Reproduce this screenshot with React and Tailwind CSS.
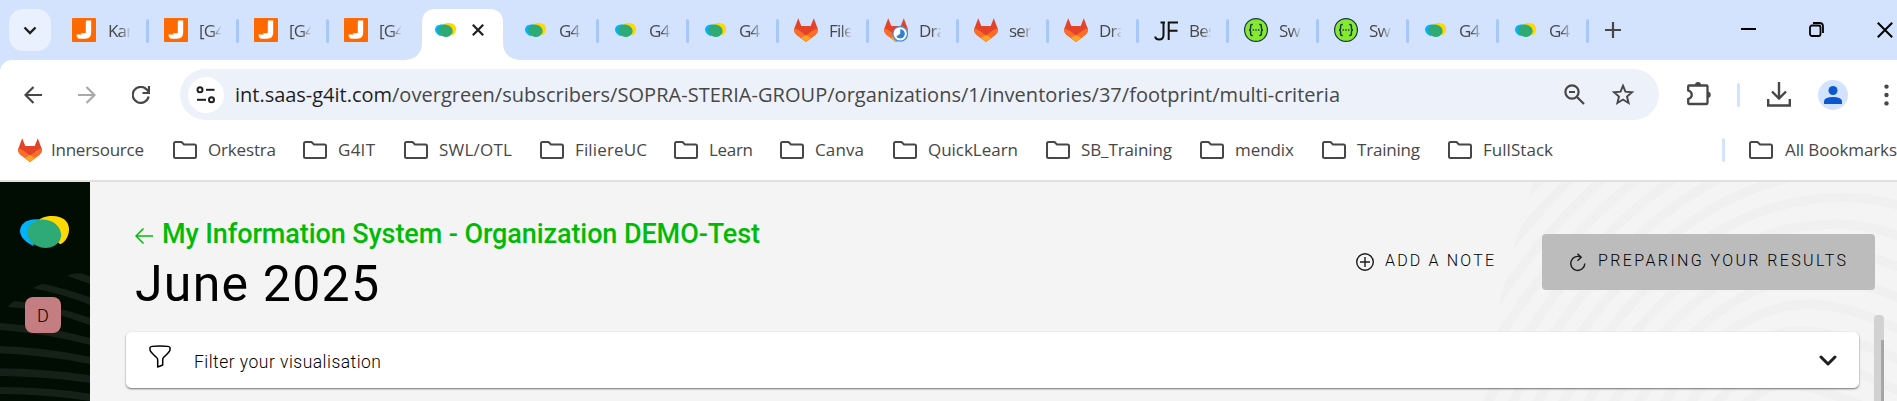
import React, { useLayoutEffect, useRef, useState } from "react";

/* Text set to a given width by spreading the difference over its letters. */
function FitText({ width, className = "", children }) {
  const ref = useRef(null);
  const [spacing, setSpacing] = useState(0);
  useLayoutEffect(() => {
    const natural = ref.current.getBoundingClientRect().width;
    setSpacing((width - natural) / (children.length - 1));
  }, []);
  return (
    <span className={`shrink-0 overflow-visible whitespace-nowrap ${className}`} style={{ width }}>
      <span ref={ref} className="inline-block" style={{ letterSpacing: spacing }}>
        {children}
      </span>
    </span>
  );
}

function G4Logo({ className }) {
  return (
    <svg viewBox="60 108 147 96" className={className} preserveAspectRatio="none">
      <path d="M112 122C128 111 143 107 158 108C190 109 208 125 207 150C206 170 195 187 180 193Z" fill="#ffd900" />
      <path d="M118 118C80 115 60 131 60 154C61 172 78 188 100 198Z" fill="#00b2ff" />
      <ellipse cx="132.500" cy="161" rx="51.500" ry="42" transform="rotate(12 132 161)" fill="#2eaa76" />
    </svg>
  );
}

function JiraIcon() {
  return (
    <svg viewBox="0 0 24 24" className="size-6">
      <rect width="24" height="24" rx="1" fill="#ff6a00" />
      <path d="M16.500 2.500V14.500Q16.500 18 13 18H8Q7.200 18 7.200 16.500" fill="none" stroke="#fff" strokeWidth="5.400" strokeLinejoin="round" />
      <path d="M12 0h2v4h-2z" fill="#ff6a00" />
    </svg>
  );
}

function GitlabIcon({ badge }) {
  return (
    <svg viewBox="0 0 24 24" className="size-6 shrink-0">
      <path d="M4.200 0.300L7.300 8H16.700L19.800 0.300L24 11.500Q24 14.500 21.500 16.800L12 24L2.500 16.800Q0 14.500 0 11.500Z" fill="#e24329" />
      <path d="M0.200 10.500Q-.3 14.500 2.500 16.800L12 24L21.500 16.800Q24.300 14.500 23.800 10.500Q20.500 11 17 13.700L12 17.500L7 13.700Q3.500 11 0.200 10.500Z" fill="#fc6d26" />
      <path d="M12 17L6.600 20L12 24L17.400 20Z" fill="#fca326" />
      {badge && (
        <g>
          <circle cx="16.200" cy="15.800" r="7.300" fill="#fff" stroke="#428fdc" strokeWidth="1.300" />
          <path d="M16.200 11.200A4.600 4.600 0 1 1 12.400 18.400L16.200 15.800Z" fill="#2f7fd6" />
        </g>
      )}
    </svg>
  );
}

function SwaggerIcon() {
  return (
    <svg viewBox="0 0 24 24" className="size-6">
      <circle cx="12" cy="12" r="11.400" fill="#85ea2d" stroke="#173647" strokeWidth="1.200" />
      <g fill="none" stroke="#173647" strokeWidth="1.500">
        <path d="M8.800 6.500H8Q6.600 6.500 6.600 8V10.200Q6.600 12 5 12Q6.600 12 6.600 13.800V16Q6.600 17.500 8 17.500H8.800" />
        <path d="M15.200 6.500H16Q17.400 6.500 17.400 8V10.200Q17.400 12 19 12Q17.400 12 17.400 13.800V16Q17.400 17.500 16 17.500H15.200" />
        <path d="M8.600 12H10M11.300 12H12.700M14 12H15.400" />
      </g>
    </svg>
  );
}

function Favicon({ kind }) {
  if (kind === "jira") return <JiraIcon />;
  if (kind === "gitlab") return <GitlabIcon />;
  if (kind === "gitlab-busy") return <GitlabIcon badge />;
  if (kind === "swagger") return <SwaggerIcon />;
  if (kind === "jf")
    return (
      <svg viewBox="0 0 24 24" className="size-6">
        <path d="M9.500 4.500V17Q9.500 21.500 5 21.500Q1.500 21.500 1.200 18.500M6.500 4.500H11M14.700 22V4.500H24M14.700 12.800H23.500" fill="none" stroke="#111" strokeWidth="2" />
      </svg>
    );
  return (
    <span className="flex h-6 w-6 items-center pl-px">
      <G4Logo className="h-[14px] w-[21px]" />
    </span>
  );
}

function Folder() {
  return (
    <svg viewBox="0 0 24 18" className="h-[18px] w-6 shrink-0">
      <path d="M1 15.500V2.500Q1 1 2.500 1H8.500L11 3.500H21.500Q23 3.500 23 5V15.500Q23 17 21.500 17H2.500Q1 17 1 15.500Z" fill="none" stroke="#474747" strokeWidth="2" strokeLinejoin="round" />
    </svg>
  );
}

const TABS = [
  ["jira", "Kar"], ["jira", "[G4"], ["jira", "[G4"], ["jira", "[G4"], ["active", ""],
  ["g4", "G4"], ["g4", "G4"], ["g4", "G4"], ["gitlab", "File"], ["gitlab-busy", "Dra"],
  ["gitlab", "ser"], ["gitlab", "Dra"], ["jf", "Bes"], ["swagger", "Sw"], ["swagger", "Sw"],
  ["g4", "G4"], ["g4", "G4"],
];

function TabStrip() {
  return (
    <div className="flex h-[60px] items-start bg-[#d3e2fd] pl-[9px]">
      <div className="mt-[9px] flex size-[42px] items-center justify-center rounded-[14px] bg-[#e9f1ff]">
        <svg viewBox="0 0 14 9" className="h-[9px] w-[14px]"><path d="M1.500 1.500L7 7L12.500 1.500" fill="none" stroke="#1f1f1f" strokeWidth="2.400" /></svg>
      </div>
      <div className="ml-2 flex h-full">
        {TABS.map(([kind, title], i) =>
          kind === "active" ? (
            <div key={i} className="relative flex h-full w-[90px] items-end">
              <svg viewBox="0 0 117 51" className="absolute bottom-0 left-[-14px] h-[51px] w-[117px]">
                <path d="M0 51Q17 49 17 34V14Q17 0 31 0H84Q98 0 98 14V34Q98 49 115 51Z" fill="#fff" />
              </svg>
              <div className="relative flex h-full items-center pl-[16px]">
                <G4Logo className="h-[14px] w-[21px]" />
                <svg viewBox="0 0 12 12" className="ml-[16px] size-3"><path d="M.8.8L11.200 11.200M11.200.8L.8 11.200" stroke="#1f1f1f" strokeWidth="2.200" /></svg>
              </div>
            </div>
          ) : (
            <div key={i} className="flex h-full w-[90px] items-center">
              <div className={i === 0 ? "ml-[13px]" : "ml-[15px]"}><Favicon kind={kind} /></div>
              <div className={`w-[22px] overflow-hidden whitespace-nowrap font-['Open_Sans',sans-serif] text-[17px] leading-[26px] tracking-[-0.8px] text-[#474747] [mask-image:linear-gradient(to_right,#000_55%,transparent_105%)] ${i === 0 ? "ml-[12px]" : "ml-[11px]"}`}>
                <span className="relative top-[1px]">{title}</span>
              </div>
              {i !== 3 && <div className="ml-auto mt-[2px] h-6 w-[3px] rounded-full bg-[#a8c7fa]" />}
            </div>
          )
        )}
      </div>
      <svg viewBox="0 0 16 16" className="mt-[22px] ml-4 size-4"><path d="M8 0V16M0 8H16" stroke="#474747" strokeWidth="2.200" /></svg>
      <div className="mt-[28px] ml-[120px] h-[2px] w-[15px] bg-black" />
      <svg viewBox="0 0 15 15" className="mt-[22px] ml-[53px] size-[15px]" fill="none" stroke="#000" strokeWidth="1.800">
        <rect x="1" y="3.500" width="10.500" height="10.500" rx="2" />
        <path d="M4 1H10.500Q14 1 14 4.500V11" />
      </svg>
      <svg viewBox="0 0 16 16" className="mt-[22px] ml-[53px] size-4 shrink-0"><path d="M.8.8L15.200 15.200M15.200.8L.8 15.200" stroke="#000" strokeWidth="2" /></svg>
    </div>
  );
}

function Toolbar() {
  return (
    <div className="flex h-[60px] items-center pt-[9px]">
      <svg viewBox="0 0 18 18" className="ml-[24px] h-[18px] w-[18px]" fill="none" stroke="#474747" strokeWidth="2.200"><path d="M18 9H2M9.500 1L1.500 9L9.500 17" /></svg>
      <svg viewBox="0 0 18 18" className="ml-[36px] h-[18px] w-[18px]" fill="none" stroke="#a9a9a9" strokeWidth="2.200"><path d="M0 9H16M8.500 1L16.500 9L8.500 17" /></svg>
      <svg viewBox="0 0 18 18" className="ml-[36px] h-[18px] w-[18px]" fill="none" stroke="#474747" strokeWidth="2.200"><path d="M16.600 10.500A8 8 0 1 1 14.700 3.500L17 6M17 0V7H10.500" /></svg>
      <div className="ml-[30px] flex h-[51px] w-[1479px] shrink-0 items-center rounded-full bg-[#ecf1fa] pl-2">
        <div className="flex size-9 items-center justify-center rounded-full bg-white">
          <svg viewBox="0 0 20 18" className="h-[18px] w-5" fill="none" stroke="#1f1f1f" strokeWidth="2">
            <circle cx="4" cy="3.800" r="2.500" /><path d="M10 3.800H18.500" />
            <circle cx="15.500" cy="13.800" r="2.500" /><path d="M1 13.800H10" />
          </svg>
        </div>
        <div className="ml-[11px] font-['Open_Sans',sans-serif] text-[20px] leading-[28px] text-[#474747]">
          <FitText width={157} className="inline-block text-[#1f1f1f]">int.saas-g4it.com</FitText>
          <FitText width={948} className="inline-block">/overgreen/subscribers/SOPRA-STERIA-GROUP/organizations/1/inventories/37/footprint/multi-criteria</FitText>
        </div>
        <svg viewBox="0 0 21 21" className="mr-[26px] ml-auto size-[21px]" fill="none" stroke="#474747" strokeWidth="2.200"><circle cx="8" cy="8" r="6.600" /><path d="M13 13L20 20M5 8H11" /></svg>
        <svg viewBox="0 0 24 23" className="mr-[24px] h-[23px] w-6" fill="none" stroke="#474747" strokeWidth="1.900"><path d="M12 2.700L14.400 8.700L21 9.200L16 13.500L17.600 20L12 16.500L6.400 20L8 13.500L3 9.200L9.600 8.700Z" /></svg>
      </div>
      <svg viewBox="0 0 25 25" className="mb-[3px] ml-[28px] size-[25px] shrink-0">
        <path d="M2 4.500H19.500Q20.500 4.500 20.500 5.500V22Q20.500 23 19.500 23H2Q1.200 23 1.200 22V18Q4.800 17 4.800 13.800Q4.800 10.500 1.200 9.500V5.500Q1.200 4.500 2 4.500Z" fill="none" stroke="#474747" strokeWidth="2.300" />
        <path d="M8 4A3 3 0 0 1 14 4ZM21 10.500A3.300 3.300 0 0 1 21 17Z" fill="#474747" />
      </svg>
      <div className="ml-[25px] h-6 w-[3px] rounded-full bg-[#d3e3fd]" />
      <svg viewBox="0 0 24 25" className="ml-[27px] h-[25px] w-6 shrink-0" fill="none" stroke="#474747" strokeWidth="2.400"><path d="M12 0V16M5 9.500L12 16.500L19 9.500M1.200 17V23.500H22.800V17" /></svg>
      <div className="ml-[27px] flex size-[30px] shrink-0 items-center justify-center rounded-full bg-[#d3e3fd]">
        <svg viewBox="0 0 18 18" className="size-[18px]" fill="#0b57d0"><circle cx="9" cy="4.500" r="4.500" /><path d="M0 18V15.500Q0 11 9 11Q18 11 18 15.500V18Z" /></svg>
      </div>
      <svg viewBox="0 0 5 22" className="ml-[36px] h-[22px] w-[5px] shrink-0" fill="#474747"><circle cx="2.500" cy="2.600" r="2.200" /><circle cx="2.500" cy="11" r="2.200" /><circle cx="2.500" cy="19.400" r="2.200" /></svg>
    </div>
  );
}

const BOOKMARKS = [
  ["Orkestra", 68, "w-[130px]"], ["G4IT", 37, "w-[101px]"], ["SWL/OTL", 73, "w-[136px]"], ["FiliereUC", 72, "w-[134px]"],
  ["Learn", 44, "w-[106px]"], ["Canva", 49, "w-[113px]"], ["QuickLearn", 90, "w-[153px]"], ["SB_Training", 91, "w-[154px]"],
  ["mendix", 59, "w-[122px]"], ["Training", 63, "w-[126px]"], ["FullStack", 70, "w-[106px]"],
];

function Bookmarks() {
  return (
    <div className="flex h-[60px] items-center overflow-hidden pl-[18px] font-['Open_Sans',sans-serif] text-[17px] leading-[26px] text-[#474747]">
      <div className="flex w-[155px] shrink-0 items-center">
        <GitlabIcon />
        <FitText width={93} className="ml-[9px]">Innersource</FitText>
      </div>
      {BOOKMARKS.map(([name, w, pitch]) => (
        <div key={name} className={`flex shrink-0 items-center ${pitch}`}>
          <Folder />
          <FitText width={w} className="ml-[11px]">{name}</FitText>
        </div>
      ))}
      <div className="ml-auto flex items-center">
        <div className="mr-6 h-6 w-[3px] rounded-full bg-[#d3e3fd]" />
        <Folder />
        <FitText width={112} className="ml-[12px]">All Bookmarks</FitText>
      </div>
    </div>
  );
}

function Sidebar() {
  return (
    <aside className="relative flex h-full w-[90px] shrink-0 flex-col items-center bg-[#010c02]">
      <svg viewBox="0 6 270 657" className="absolute inset-0 h-[219px] w-[90px]" fill="#142018">
        <path d="M200 287Q225 278 242 280L270 288V312Z" />
        <path d="M98 325Q115 315 128 311Q200 326 270 352V375Q190 342 98 325Z" />
        <path d="M22 380L43 363Q160 375 270 413V436Q150 388 22 380Z" />
        <path d="M0 429Q140 438 270 474V495Q140 461 0 450Z" />
        <path d="M0 498Q140 502 270 530V552Q140 527 0 520Z" />
        <path d="M0 565Q140 566 270 586V609Q140 590 0 588Z" />
        <path d="M0 621Q140 620 270 641V663Q140 643 0 642Z" />
      </svg>
      <G4Logo className="relative mt-[34px] ml-[-1px] h-8 w-[49px]" />
      <div className="relative mt-[49px] mr-1 flex size-9 items-center justify-center rounded-lg bg-[#c47d80] font-['Roboto',sans-serif] text-[18px] font-light text-black">D</div>
    </aside>
  );
}

const ARCS = [-7, -6, -5, -4, -3, -2, -1, 0, 1, 2, 3, 4, 5, 6, 7].map((k) => {
  const x0 = 250 + 75 * k;
  const px = 1090 - 24 * k;
  const py = 52 + 80 * k;
  const yb = 720;
  const c1 = `${x0 + (px - x0) * 0.22} ${yb - (yb - py) * 0.62}`;
  const c2 = `${px - (px - x0) * 0.42} ${py}`;
  return `M${x0 - 30} ${yb}C${c1} ${c2} ${px} ${py}Q${px + 90} ${py} 1270 ${py + 28 + 13 * Math.max(k, 0)}`;
});

function Backdrop() {
  return (
    <svg viewBox="0 6 1251 657" className="absolute top-0 right-0 h-[219px] w-[417px]">
      <clipPath id="edge"><path d="M158 0L140 78L125 130L103 200L70 325L55 385L36 450L0 560V663H1251V0Z" /></clipPath>
      <g clipPath="url(#edge)" fill="none" stroke="#f0f0f0" strokeWidth="28">
        {ARCS.map((d) => <path key={d} d={d} />)}
      </g>
    </svg>
  );
}

function Main() {
  return (
    <main className="relative flex h-full grow flex-col bg-[#f4f4f4] font-['Roboto',sans-serif]">
      <Backdrop />
      <div className="relative flex h-[150px] justify-between pr-[22px] pl-[45px]">
        <div className="pt-[34px]">
          <div className="flex items-center text-[#00bb06]">
            <svg viewBox="0 0 18 16" className="mt-[4px] h-4 w-[18px]" fill="none" stroke="currentColor" strokeWidth="1.500"><path d="M18 8H1M8.500.5L1 8L8.500 15.500" /></svg>
            <FitText width={598} className="ml-[9px] text-[27px] leading-9 font-medium">My Information System - Organization DEMO-Test</FitText>
          </div>
          <FitText width={244} className="mt-[3px] block text-[50px] leading-[58px] text-black">June 2025</FitText>
        </div>
        <div className="mt-[52px] flex h-14 items-center text-[16px] font-light text-black">
          <svg viewBox="0 0 18 18" className="-ml-px size-[18px]" fill="none" stroke="#1c1c1c" strokeWidth="1.400"><circle cx="9" cy="9" r="8.300" /><path d="M9 4V14M4 9H14" /></svg>
          <FitText width={109} className="-mt-0.5 ml-[11px]">ADD A NOTE</FitText>
          <div className="ml-[48px] flex h-14 w-[333px] items-center rounded bg-[#bcbcbc] pl-[28px]">
            <svg viewBox="0 0 16 19" className="h-[19px] w-4" fill="none" stroke="#1c1c1c" strokeWidth="1.400"><path d="M14.800 10.500A7 7 0 1 1 11 4.200M7.500.7L11.200 4.200L7.500 7.700" /></svg>
            <FitText width={248} className="-mt-0.5 ml-[12px]">PREPARING YOUR RESULTS</FitText>
          </div>
        </div>
      </div>
      <div className="relative ml-9 flex h-14 w-[1733px] items-center rounded-[5px] bg-white pr-[22px] pl-[23px] shadow-[0_1px_2px_rgba(0,0,0,0.55)]">
        <svg viewBox="0 0 22 23" className="mb-[8px] h-[23px] w-[22px]" fill="none" stroke="#000" strokeWidth="1.500" strokeLinejoin="round"><path d="M1 2.500Q1 1 11 1Q21 1 21 2.500V5Q21 6.500 14.500 12.500Q13.700 13.300 13.700 15V20L8.700 22V15Q8.700 13.300 7.500 12.500Q1 6.500 1 5Z" /></svg>
        <FitText width={187} className="mt-[5px] ml-[23px] text-[17.500px] font-light text-black">Filter your visualisation</FitText>
        <svg viewBox="0 0 18 11" className="ml-auto h-[11px] w-[18px]"><path d="M2 2L9 9L16 2" fill="none" stroke="#1b1f20" strokeWidth="3" strokeLinecap="round" strokeLinejoin="round" /></svg>
      </div>
      <div className="absolute top-[133px] right-[13px] flex h-[86px] w-[10px] items-end justify-end rounded-t bg-[#d2d2d2]">
        <div className="h-[61px] w-[3px] bg-[#a5a5a5]" />
      </div>
    </main>
  );
}

export default function App() {
  return (
    <div className="flex h-[401px] w-[1897px] flex-col overflow-hidden bg-[#d3e2fd]">
      <TabStrip />
      <div className="h-[122px] shrink-0 rounded-tl-xl border-b-2 border-[#e0e0e0] bg-white">
        <Toolbar />
        <Bookmarks />
      </div>
      <div className="flex h-[219px] bg-[#f4f4f4]">
        <Sidebar />
        <Main />
      </div>
    </div>
  );
}
